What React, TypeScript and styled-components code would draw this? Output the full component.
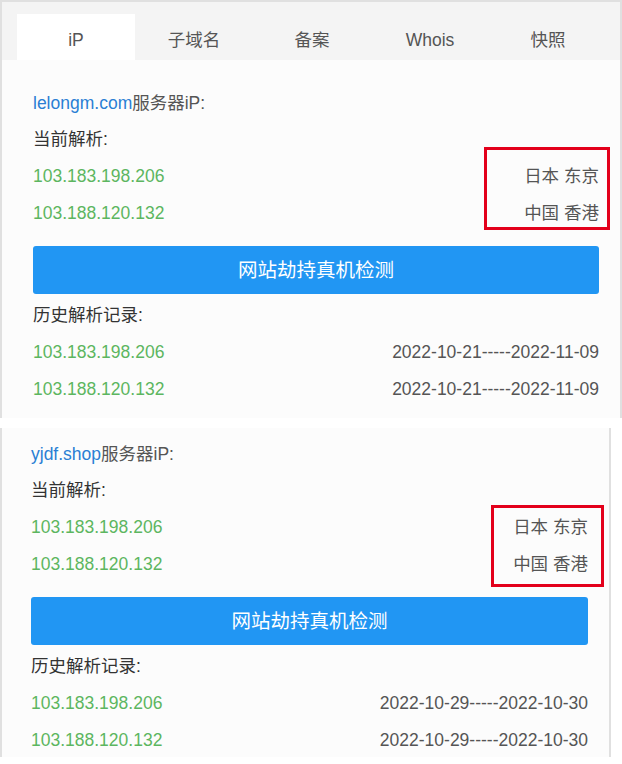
import React from "react";
import styled, { createGlobalStyle } from "styled-components";

const GlobalStyle = createGlobalStyle`
  html, body {
    margin: 0;
    padding: 0;
    background: #fff;
  }
  body {
    font-family: "Liberation Sans", "Noto Sans CJK SC", sans-serif;
    font-size: 17.5px;
    line-height: 22px;
    color: #555;
  }
`;

type Record = { ip: string; place: string };
type History = { ip: string; range: string };
type FrameBox = { top: number; right: number; bottom: number; left: number };

const Page = styled.div`
  display: flex;
  flex-direction: column;
  gap: 10px;
  width: 622px;
`;

const Panel = styled.div<{ $width: number; $top?: boolean }>`
  width: ${(p) => p.$width}px;
  box-sizing: border-box;
  background: #fcfcfc;
  border: 2px solid #e0e0e0;
  border-top-width: ${(p) => (p.$top ? 2 : 0)}px;
  border-bottom: none;
`;

const TabBar = styled.div`
  display: flex;
  background: #f4f4f4;
  padding: 12px 0 0 15px;
  height: 46px;
`;

const Tab = styled.div<{ $active?: boolean }>`
  width: 118px;
  display: flex;
  align-items: center;
  justify-content: center;
  background: ${(p) => (p.$active ? "#fff" : "transparent")};
  color: #555;
  padding-top: 6px;
  box-sizing: border-box;
`;

const Body = styled.div<{ $pt: number; $pl: number; $pr: number; $pb: number }>`
  padding: ${(p) => `${p.$pt}px ${p.$pr}px ${p.$pb}px ${p.$pl}px`};
  display: flex;
  flex-direction: column;
`;

const Title = styled.div`
  height: 36px;
  display: flex;
  align-items: center;
  padding-top: 2px;
  box-sizing: border-box;
  color: #555;
`;

const Domain = styled.span`
  color: #2a7fd4;
`;

const Label = styled.div`
  height: 36px;
  display: flex;
  align-items: center;
  padding-top: 2px;
  box-sizing: border-box;
  color: #333;
`;

const Current = styled.div`
  display: flex;
  justify-content: space-between;
`;

const Column = styled.div`
  display: flex;
  flex-direction: column;
`;

const Places = styled(Column)<{ $frame: FrameBox }>`
  position: relative;
  align-items: flex-end;
  &::after {
    content: "";
    position: absolute;
    top: ${(p) => p.$frame.top}px;
    right: ${(p) => p.$frame.right}px;
    bottom: ${(p) => p.$frame.bottom}px;
    left: ${(p) => p.$frame.left}px;
    border: 3px solid #e3001b;
  }
`;

const Line = styled.div`
  height: 37px;
  display: flex;
  align-items: center;
  padding-top: 3px;
  box-sizing: border-box;
`;

const Ip = styled(Line)`
  color: #5cb660;
`;

const Place = styled(Line)`
  color: #555;
`;

const Row = styled.div`
  height: 37px;
  display: flex;
  align-items: center;
  justify-content: space-between;
  padding-top: 3px;
  box-sizing: border-box;
`;

const IpText = styled.span`
  color: #5cb660;
`;

const DateText = styled.span`
  color: #555;
`;

const CheckButton = styled.button`
  margin: 16px 0 2px;
  height: 48px;
  border: none;
  border-radius: 3px;
  background: #2196f3;
  color: #fff;
  font-family: inherit;
  font-size: 19.5px;
  line-height: 24px;
  padding: 0;
  cursor: pointer;
`;

function Section({
  domain,
  current,
  history,
  frame,
}: {
  domain: string;
  current: Record[];
  history: History[];
  frame: FrameBox;
}) {
  return (
    <>
      <Title>
        <Domain>{domain}</Domain>服务器iP:
      </Title>
      <Label>当前解析:</Label>
      <Current>
        <Column>
          {current.map((r) => (
            <Ip key={r.ip}>{r.ip}</Ip>
          ))}
        </Column>
        <Places $frame={frame}>
          {current.map((r) => (
            <Place key={r.ip}>{r.place}</Place>
          ))}
        </Places>
      </Current>
      <CheckButton>网站劫持真机检测</CheckButton>
      <Label>历史解析记录:</Label>
      {history.map((h) => (
        <Row key={h.ip}>
          <IpText>{h.ip}</IpText>
          <DateText>{h.range}</DateText>
        </Row>
      ))}
    </>
  );
}

const current: Record[] = [
  { ip: "103.183.198.206", place: "日本 东京" },
  { ip: "103.188.120.132", place: "中国 香港" },
];

export default function App() {
  return (
    <>
      <GlobalStyle />
      <Page>
        <Panel $width={622} $top>
          <TabBar>
            <Tab $active>iP</Tab>
            <Tab>子域名</Tab>
            <Tab>备案</Tab>
            <Tab>Whois</Tab>
            <Tab>快照</Tab>
          </TabBar>
          <Body $pt={24} $pl={31} $pr={21} $pb={12}>
            <Section
              domain="lelongm.com"
              current={current}
              history={[
                { ip: "103.183.198.206", range: "2022-10-21-----2022-11-09" },
                { ip: "103.188.120.132", range: "2022-10-21-----2022-11-09" },
              ]}
              frame={{ top: -9, right: -11, bottom: 0, left: -40 }}
            />
          </Body>
        </Panel>
        <Panel $width={611}>
          <Body $pt={7} $pl={29} $pr={21} $pb={0}>
            <Section
              domain="yjdf.shop"
              current={current}
              history={[
                { ip: "103.183.198.206", range: "2022-10-29-----2022-10-30" },
                { ip: "103.188.120.132", range: "2022-10-29-----2022-10-30" },
              ]}
              frame={{ top: -2, right: -16, bottom: -6, left: -22 }}
            />
          </Body>
        </Panel>
      </Page>
    </>
  );
}
